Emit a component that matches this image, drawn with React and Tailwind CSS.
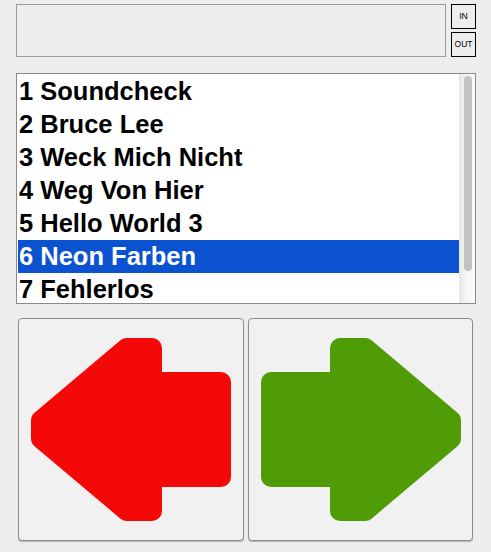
import React from "react";

const songs = [
  "1 Soundcheck",
  "2 Bruce Lee",
  "3 Weck Mich Nicht",
  "4 Weg Von Hier",
  "5 Hello World 3",
  "6 Neon Farben",
  "7 Fehlerlos",
];

function Arrow({ points, color, w, h }) {
  return (
    <svg width={w} height={h} viewBox={`0 0 ${w} ${h}`} className="block">
      <polygon
        points={points}
        fill={color}
        stroke={color}
        strokeWidth="20"
        strokeLinejoin="round"
      />
    </svg>
  );
}

export default function App() {
  return (
    <div
      className="w-[491px] h-[552px] bg-[#ededed] overflow-hidden"
      style={{ fontFamily: '"Liberation Sans", Arial, sans-serif' }}
    >
      <div className="flex pt-[4px] pl-[16px]">
        <div className="w-[430px] h-[53px] border border-[#9a9a9a] bg-[#eeeeee]" />
        <div className="ml-[5px] flex flex-col gap-[3px]">
          <div className="w-[25px] h-[25px] border border-black flex items-center justify-center text-[8.5px] text-black">
            IN
          </div>
          <div className="w-[25px] h-[25px] border border-black flex items-center justify-center text-[8.5px] text-black">
            OUT
          </div>
        </div>
      </div>

      <div className="mt-[16px] ml-[16px] w-[460px] h-[231px] border border-[#8a8a8a] bg-white flex overflow-hidden">
        <div className="flex-1 pt-[1px] pl-[1px] overflow-hidden">
          {songs.map((s, i) => (
            <div
              key={s}
              className={
                "h-[33px] leading-[33px] pl-[1px] text-[25.5px] font-bold whitespace-nowrap " +
                (i === 5 ? "bg-[#0a52d0] text-white" : "text-black")
              }
            >
              {s}
            </div>
          ))}
        </div>
        <div className="w-[16px] h-full bg-gradient-to-r from-[#e6e6e6] via-[#f7f7f7] to-[#fbfbfb] flex justify-center pt-[2px]">
          <div className="ml-[1px] w-[8px] h-[195px] rounded-full bg-[#c2c2c2]" />
        </div>
      </div>

      <div className="flex gap-[4px] mt-[14px] ml-[18px]">
        <div className="w-[226px] h-[223px] rounded-[4px] border border-[#8e8e8e] bg-[#f1f1f1] shadow-[0_1px_1px_rgba(0,0,0,0.25)]">
          <Arrow
            w={224}
            h={221}
            color="#f50808"
            points="22,101.5 107.9,29 133,29 133,63 202,63 202,158 133,158 133,192 107.9,192 22,119.5"
          />
        </div>
        <div className="w-[225px] h-[223px] rounded-[4px] border border-[#8e8e8e] bg-[#f1f1f1] shadow-[0_1px_1px_rgba(0,0,0,0.25)]">
          <Arrow
            w={223}
            h={221}
            color="#4f9c07"
            points="202,101.5 116.1,29 91,29 91,63 22,63 22,158 91,158 91,192 116.1,192 202,119.5"
          />
        </div>
      </div>
    </div>
  );
}
